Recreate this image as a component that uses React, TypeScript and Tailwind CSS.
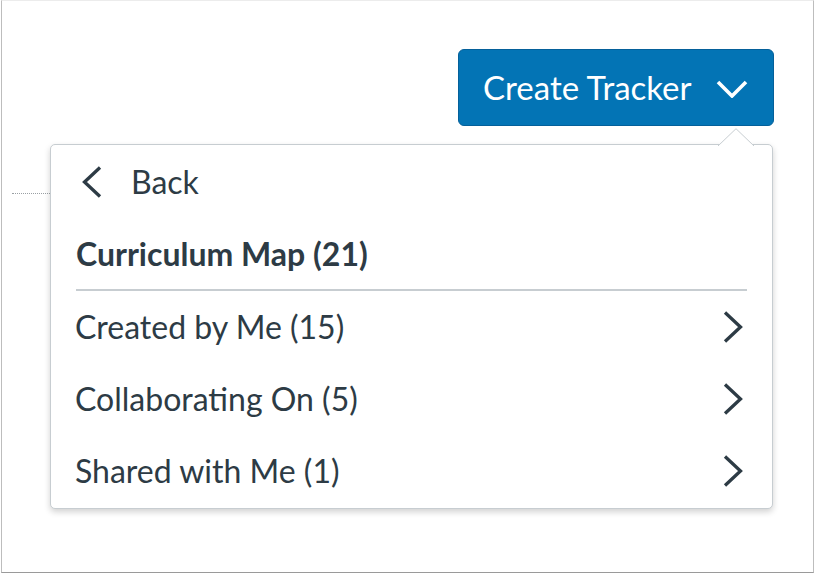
import React from "react";

const ChevronRight = () => (
  <svg width="22" height="32" viewBox="0 0 22 32" fill="none">
    <path d="M3 1.5 L18.5 16 L3 30.5" stroke="#2d3b45" strokeWidth="3.3" strokeLinecap="butt" strokeLinejoin="miter" />
  </svg>
);

const ChevronLeft = () => (
  <svg width="22" height="32" viewBox="0 0 22 32" fill="none">
    <path d="M19 1.5 L3.5 16 L19 30.5" stroke="#2d3b45" strokeWidth="3.3" strokeLinecap="butt" strokeLinejoin="miter" />
  </svg>
);

const ChevronDown = () => (
  <svg width="32" height="18" viewBox="0 0 32 18" fill="none">
    <path d="M2 2 L16 16 L30 2" stroke="#ffffff" strokeWidth="3.6" strokeLinecap="butt" strokeLinejoin="miter" />
  </svg>
);

export default function App() {
  const items = ["Created by Me (15)", "Collaborating On (5)", "Shared with Me (1)"];
  return (
    <div className="w-[816px] h-[574px] bg-white" style={{ fontFamily: "Lato, 'Open Sans', sans-serif" }}>
      <div className="relative ml-px w-[813px] h-[573px] border-l border-r border-b border-t border-l-[#bdbdbd] border-r-[#bdbdbd] border-b-[#9a9a9a] border-t-[#ececec] bg-white">
        <div className="flex justify-end pt-[48px] pr-[39px]">
          <button className="flex items-center h-[77px] w-[316px] rounded-[6px] bg-[#0374b5] border border-[#04609a] pl-[24px] text-white text-[33px] leading-none">
            <span>Create Tracker</span>
            <span className="ml-[24px] mt-[2px] flex"><ChevronDown /></span>
          </button>
        </div>

        <div className="absolute left-[10px] top-[192px] w-[38px] border-t border-dotted border-[#9aa0a4]" />

        <div className="absolute left-[48px] top-[143px] w-[723px] h-[365px] bg-white border border-[#c7cdd1] rounded-[5px] shadow-[0_3px_6px_rgba(0,0,0,0.18)] text-[#2d3b45]">
          <svg className="absolute left-[667px] top-[-17px]" width="36" height="18" viewBox="0 0 36 18">
            <path d="M0 18 L18 0.7 L36 18" fill="white" stroke="#c7cdd1" strokeWidth="1" />
          </svg>
          <div className="flex items-center h-[74px] pl-[30px]">
            <ChevronLeft />
            <span className="ml-[28px] text-[32px] leading-none">Back</span>
          </div>
          <div className="ml-[25px] mr-[25px] flex items-center h-[72px] border-b-2 border-[#c7cdd1]">
            <span className="text-[32px] font-bold leading-none">Curriculum Map (21)</span>
          </div>
          {items.map((t) => (
            <div key={t} className="flex items-center justify-between h-[72px] pl-[24px] pr-[28px]">
              <span className="text-[32px] leading-none">{t}</span>
              <ChevronRight />
            </div>
          ))}
        </div>
      </div>
    </div>
  );
}
